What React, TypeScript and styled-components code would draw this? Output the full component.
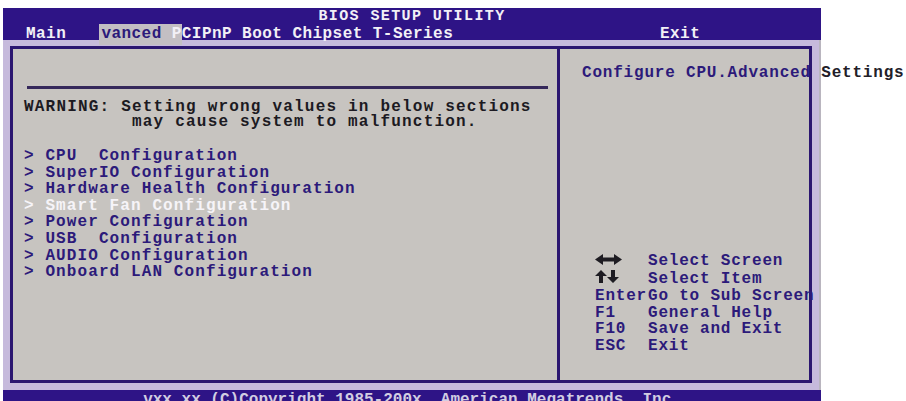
import styled, { createGlobalStyle } from "styled-components";

const GlobalStyle = createGlobalStyle`
  html, body {
    margin: 0;
    padding: 0;
    background: #ffffff;
    overflow: hidden;
  }
  body {
    font-family: "Liberation Mono", "DejaVu Sans Mono", monospace;
    font-weight: bold;
    font-size: 16px;
  }
`;

const Screen = styled.div`
  margin: 8px 0 0 3px;
  width: 818px;
`;

const Header = styled.div`
  position: relative;
  z-index: 1;
  height: 32px;
  background: #2e1486;
  color: #f2f0f6;
  display: flex;
  flex-direction: column;
`;

const Title = styled.div`
  height: 15px;
  line-height: 15px;
  font-size: 15px;
  text-align: center;
  letter-spacing: 1.4px;
  padding-top: 1px;
  white-space: pre;
`;

const MenuRow = styled.div`
  flex: 1;
  display: grid;
  grid-template-columns: 554px 1fr;
  align-items: end;
  line-height: 16px;
  letter-spacing: 0.45px;
  white-space: pre;
`;

const MenuLeft = styled.div`
  padding-left: 23px;
  display: flex;
  align-items: flex-end;
`;

const ActiveTab = styled.span`
  background: #c3bfc3;
  color: #2c1a7a;
  margin-left: 3px;
  padding: 2px 0 3px 2px;
  margin-bottom: -3px;
`;

const TabCut = styled.span`
  color: #f2f0f6;
`;

const MenuRight = styled.div`
  padding-left: 103px;
`;

const Body = styled.div`
  background: #c6badc;
  padding: 6px 7px 7px 7px;
  border-right: 2px solid #b9b5bf;
`;

const Frame = styled.div`
  border: 3px solid #2b1670;
  height: 331px;
  display: grid;
  grid-template-columns: 544px 3px 1fr;
  background: #c7c4c0;
`;

const Divider = styled.div`
  background: #2b1670;
`;

const LeftPanel = styled.div`
  padding: 37px 9px 0 11px;
  display: flex;
  flex-direction: column;
  white-space: pre;
`;

const Rule = styled.div`
  height: 3px;
  margin-left: 3px;
  background: #35285a;
`;

const Warning = styled.div`
  margin-top: 11px;
  line-height: 15px;
  color: #1c1a22;
  letter-spacing: 1.2px;
`;

const ItemList = styled.div`
  margin-top: 18px;
  display: flex;
  flex-direction: column;
`;

const Item = styled.div<{ $selected?: boolean }>`
  line-height: 16.6px;
  letter-spacing: 1.1px;
  color: ${(p) => (p.$selected ? "#f6f4f8" : "#2c1a7a")};
`;

const RightPanel = styled.div`
  padding: 16px 0 25px 22px;
  display: flex;
  flex-direction: column;
  white-space: pre;
  letter-spacing: 0.8px;
`;

const HelpTitle = styled.div`
  line-height: 16px;
  color: #2c1a7a;
`;

const Outside = styled.span`
  color: #222028;
`;

const KeyHelp = styled.div`
  margin-top: auto;
  padding-left: 13px;
  display: flex;
  flex-direction: column;
`;

const KeyRow = styled.div`
  display: grid;
  grid-template-columns: 53px auto;
  align-items: center;
  line-height: 16.8px;
  color: #2c1a7a;
`;

const Footer = styled.div`
  background: #2e1486;
  color: #d2cde2;
  height: 22px;
  padding-top: 2px;
  line-height: 16px;
  text-align: center;
  white-space: pre;
`;

const LeftRightArrow = () => (
  <svg width="27" height="11" viewBox="0 0 27 11">
    <polygon points="0,5.5 8,0 8,3.5 19,3.5 19,0 27,5.5 19,11 19,7.5 8,7.5 8,11" fill="#1e1c22" />
  </svg>
);

const UpDownArrow = () => (
  <svg width="24" height="13" viewBox="0 0 24 13">
    <polygon points="6,0 12,6 8,6 8,13 4,13 4,6 0,6" fill="#1e1c22" />
    <polygon points="18,13 24,7 20,7 20,0 16,0 16,7 12,7" fill="#1e1c22" />
  </svg>
);

const items = [
  "> CPU  Configuration",
  "> SuperIO Configuration",
  "> Hardware Health Configuration",
  "> Smart Fan Configuration",
  "> Power Configuration",
  "> USB  Configuration",
  "> AUDIO Configuration",
  "> Onboard LAN Configuration",
];

const keys: { key: React.ReactNode; desc: string }[] = [
  { key: <LeftRightArrow />, desc: "Select Screen" },
  { key: <UpDownArrow />, desc: "Select Item" },
  { key: "Enter", desc: "Go to Sub Screen" },
  { key: "F1", desc: "General Help" },
  { key: "F10", desc: "Save and Exit" },
  { key: "ESC", desc: "Exit" },
];

export default function App() {
  return (
    <>
      <GlobalStyle />
      <Screen>
        <Header>
          <Title>BIOS SETUP UTILITY</Title>
          <MenuRow>
            <MenuLeft>
              <span>{"Main   "}</span>
              <ActiveTab>
                {"vanced "}
                <TabCut>P</TabCut>
              </ActiveTab>
              <span>CIPnP Boot Chipset T-Series</span>
            </MenuLeft>
            <MenuRight>Exit</MenuRight>
          </MenuRow>
        </Header>
        <Body>
          <Frame>
            <LeftPanel>
              <Rule />
              <Warning>
                {"WARNING: Setting wrong values in below sections\n          may cause system to malfunction."}
              </Warning>
              <ItemList>
                {items.map((label, i) => (
                  <Item key={label} $selected={i === 3}>
                    {label}
                  </Item>
                ))}
              </ItemList>
            </LeftPanel>
            <Divider />
            <RightPanel>
              <HelpTitle>
                Configure CPU.Advanced<Outside> Settings</Outside>
              </HelpTitle>
              <KeyHelp>
                {keys.map((k) => (
                  <KeyRow key={k.desc}>
                    <span>{k.key}</span>
                    <span>{k.desc}</span>
                  </KeyRow>
                ))}
              </KeyHelp>
            </RightPanel>
          </Frame>
        </Body>
        <Footer>vxx.xx (C)Copyright 1985-200x, American Megatrends, Inc.</Footer>
      </Screen>
    </>
  );
}
